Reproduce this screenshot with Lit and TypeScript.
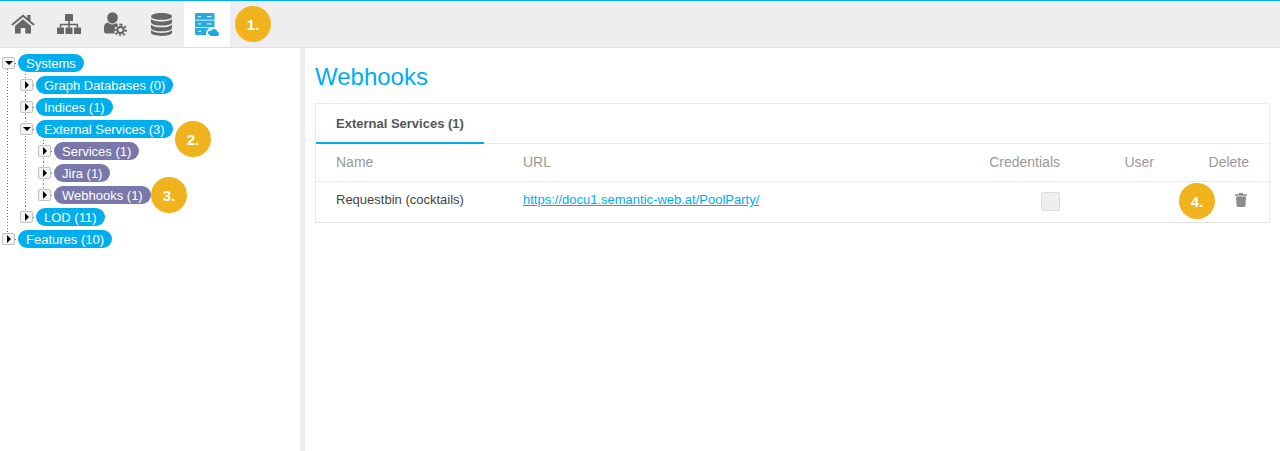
import { LitElement, html, css, svg } from "lit";
import { customElement } from "lit/decorators.js";

type Node = { label: string; kind: "blue" | "purple"; open?: boolean; kids?: Node[]; badge?: string; badgeClass?: string };

const tree: Node[] = [
  {
    label: "Systems", kind: "blue", open: true, kids: [
      { label: "Graph Databases (0)", kind: "blue" },
      { label: "Indices (1)", kind: "blue" },
      {
        label: "External Services (3)", kind: "blue", open: true, badge: "2.", badgeClass: "b2", kids: [
          { label: "Services (1)", kind: "purple" },
          { label: "Jira (1)", kind: "purple" },
          { label: "Webhooks (1)", kind: "purple", badge: "3.", badgeClass: "b3" },
        ],
      },
      { label: "LOD (11)", kind: "blue" },
    ],
  },
  { label: "Features (10)", kind: "blue" },
];

const icons = [
  svg`<svg width="24" height="20" viewBox="0 0 24 20"><path fill="#666" d="M12 0.500 0.300 10.300l1.200 1.500L12 3.100l10.500 8.700 1.200-1.500-4.200-3.500V1h-3.300v3zM4 11.900V19.500h5.700v-5.400h4.600v5.400H20V11.900L12 5.200z"/></svg>`,
  svg`<svg width="24" height="20" viewBox="0 0 24 20"><g fill="#666"><rect x="8" y="0" width="8" height="7" rx=".6"/><rect x="0" y="13.500" width="7" height="6.500" rx=".6"/><rect x="8.500" y="13.500" width="7" height="6.500" rx=".6"/><rect x="17" y="13.500" width="7" height="6.500" rx=".6"/><path d="M11.200 7h1.600v2.700h8.400V13.500h-1.600V11.300h-6.800v2.200h-1.600v-2.200H4.400v2.200H2.800V9.700h8.400z"/></g></svg>`,
  svg`<svg width="23" height="24" viewBox="0 0 23 24"><path fill="#666" d="M8.500 0.200a5.300 5.300 0 0 1 5.300 5.500c0 3-2.400 5.800-5.300 5.800S3.200 8.700 3.200 5.700A5.300 5.300 0 0 1 8.500.2zM4 10.500c1.200 1.200 2.700 1.900 4.500 1.900 1.400 0 2.600-.4 3.600-1.100.8.200 1.500.5 2.100 1-2.300 1.100-3.900 3.500-3.900 6.200 0 1.100.2 2 .6 2.900H2.200c-1.300 0-2.200-.8-2.200-2.100v-4.100c0-2.600 1.500-4.100 4-4.700z"/><g fill="none" stroke="#666"><circle cx="16.500" cy="18" r="3.200" stroke-width="2.200"/><path stroke-width="2" stroke-dasharray="2.100 1.960" d="M16.500 12.500a5.500 5.500 0 1 1 0 11 5.500 5.500 0 0 1 0-11z"/></g></svg>`,
  svg`<svg width="21" height="23" viewBox="0 0 21 23"><g fill="#666"><path d="M10.500 0C16.300 0 21 1.400 21 3.400s-4.700 3.400-10.500 3.400S0 5.400 0 3.400 4.700 0 10.500 0z"/><path d="M0 5.700C1.500 7.500 5.800 8.500 10.500 8.500s9-1 10.500-2.800v3.500c0 2-4.700 3.400-10.500 3.400S0 11.200 0 9.200z"/><path d="M0 11.400c1.500 1.900 5.800 2.900 10.500 2.900s9-1 10.500-2.900v3.500c0 2-4.700 3.400-10.500 3.400S0 16.900 0 14.900z"/><path d="M0 17c1.500 1.900 5.800 2.900 10.500 2.900S19.500 18.900 21 17v2.600c0 2-4.700 3.400-10.500 3.400S0 21.600 0 19.600z"/></g></svg>`,
  svg`<svg width="24" height="23" viewBox="0 0 24 23"><path fill="#29abe2" d="M1.500 0h16.500c.8 0 1.500.7 1.500 1.500V15l-4 7H1.500C.7 22 0 21.300 0 20.500v-19C0 .7.700 0 1.500 0z"/><g fill="#cdeefb"><rect x="0" y="6.700" width="19.500" height="1"/><rect x="0" y="14" width="19.500" height="1"/><rect x="3" y="3" width="3" height="1.200"/><rect x="3" y="10.300" width="3" height="1.200"/><rect x="3" y="17.800" width="3" height="1.200"/><rect x="12" y="3" width="4.500" height="1.200"/><rect x="12" y="10.300" width="4.500" height="1.200"/></g><path fill="#eef9fe" d="M11 23v-4l3-4h7l3 3v5z"/><path fill="#1ea7e4" d="M15.200 23h6.400c1.300 0 2.400-.9 2.400-2.100 0-1.100-.8-1.900-1.800-2.100-.2-1.700-1.500-2.800-3.100-2.800-1.200 0-2.300.7-2.800 1.700-.3-.1-.5-.1-.8-.1-1.300 0-2.500 1-2.500 2.200 0 1.300 1.100 2.200 2.200 2.200z"/></svg>`,
];

@customElement("app-root")
export class AppRoot extends LitElement {
  static styles = css`
    :host { display: block; height: 451px; overflow: hidden; background: #fff; font-family: "Liberation Sans", Arial, sans-serif; color: #444; }
    .topbar { display: flex; height: 46px; background: #eeeeee; border-top: 1px solid #00aeef; border-bottom: 1px solid #dedede; align-items: stretch; }
    .tab { width: 46px; display: flex; align-items: center; justify-content: center; }
    .tab.active { background: #fff; }
    .badge { width: 36px; height: 36px; border-radius: 50%; background: #f0b31d; color: #fff; font-weight: 700; font-size: 15px; display: flex; align-items: center; justify-content: center; flex: none; }
    .topbar .badge { margin: 5px 0 0 5px; }
    .body { display: flex; height: 403px; }
    .side { width: 305px; flex: none; padding: 4px 0 0 2px; box-sizing: border-box; border-right: 5px solid #eeeeee; }
    ul { list-style: none; margin: 0; padding: 0; }
    ul ul { padding-left: 18px; }
    li { position: relative; }
    .row { display: flex; align-items: center; height: 22px; position: relative; }
    li::before { content: ""; position: absolute; left: 5px; top: 0; bottom: 0; width: 1px; background: repeating-linear-gradient(#777 0 1px, transparent 1px 3px); }
    li:last-child::before { bottom: auto; height: 11px; }
    .side > ul > li:first-child::before { top: 11px; }
    .toggle { width: 11px; height: 10px; border: 1px solid #c2c2c2; border-radius: 2px; background: #f2f2f2; flex: none; position: relative; margin-right: 3px; z-index: 1; }
    .toggle::after { content: ""; position: absolute; width: 0; height: 0; border-style: solid; }
    .toggle.closed::after { left: 4px; top: 1px; border-width: 4px 0 4px 4px; border-color: transparent transparent transparent #000; }
    .toggle.opened::after { left: 1.500px; top: 3px; border-width: 4px 4px 0 4px; border-color: #000 transparent transparent transparent; }
    .pill { height: 18px; line-height: 20px; border-radius: 9px; color: #fff; font-size: 13px; padding: 0 8px; white-space: nowrap; position: relative; }
    .pill::before { content: ""; position: absolute; left: -3px; top: 9px; width: 1px; height: 1px; background: #777; }
    .blue { background: #00aeef; }
    .purple { background: #7a77aa; }
    .row .b2 { position: absolute; left: 155px; top: 3px; z-index: 2; }
    .row .b3 { position: absolute; left: 113px; top: -7px; z-index: 2; }
    .main { flex: 1; padding: 15px 10px 0 10px; min-width: 0; }
    h1 { margin: 0 0 12px; font-size: 24px; font-weight: 400; line-height: 28px; color: #00aeef; }
    .card { border: 1px solid #eaeaea; border-bottom-color: #e0e0e0; }
    .tabs { height: 39px; display: flex; border-bottom: 1px solid #eaeaea; }
    .tabitem { width: 168px; box-sizing: border-box; padding-left: 20px; font-size: 13px; font-weight: 700; color: #555; line-height: 39px; border-bottom: 2px solid #00aeef; height: 40px; }
    .grid { display: grid; grid-template-columns: 187px 1fr 130px 94px 95px; padding: 0 20px; align-items: center; font-size: 13px; }
    .head { height: 37px; color: #999; border-bottom: 1px solid #eaeaea; font-size: 14px; }
    .head > span { margin-top: -2px; }
    .rowdata { height: 40px; color: #444; }
    .rowdata > span, .rowdata > a { margin-top: -5px; }
    .r { justify-self: end; }
    a { color: #00aeef; }
    .cell { display: flex; justify-content: flex-end; align-items: center; position: relative; }
    .check { width: 17px; height: 17px; border: 1px solid #dcdcdc; background: #eeeeee; border-radius: 2px; margin-top: -2px; }
    .del .badge { position: absolute; right: 34px; top: -14px; }
    .trash { display: block; margin-right: 2px; margin-top: -4px; }
  `;

  private renderNode(n: Node): unknown {
    return html`<li>
      <div class="row">
        <span class="toggle ${n.open ? "opened" : "closed"}"></span>
        <span class="pill ${n.kind}">${n.label}</span>
        ${n.badge ? html`<span class="badge ${n.badgeClass}">${n.badge}</span>` : ""}
      </div>
      ${n.open && n.kids ? html`<ul>${n.kids.map((k) => this.renderNode(k))}</ul>` : ""}
    </li>`;
  }

  render() {
    return html`
      <div class="topbar">
        ${icons.map((ic, i) => html`<div class="tab ${i === 4 ? "active" : ""}">${ic}</div>`)}
        <span class="badge">1.</span>
      </div>
      <div class="body">
        <aside class="side"><ul>${tree.map((n) => this.renderNode(n))}</ul></aside>
        <main class="main">
          <h1>Webhooks</h1>
          <section class="card">
            <div class="tabs"><div class="tabitem">External Services (1)</div></div>
            <div class="grid head">
              <span>Name</span><span>URL</span><span class="r">Credentials</span><span class="r">User</span><span class="r">Delete</span>
            </div>
            <div class="grid rowdata">
              <span>Requestbin (cocktails)</span>
              <a href="#">https://docu1.semantic-web.at/PoolParty/</a>
              <div class="cell"><span class="check"></span></div>
              <span></span>
              <div class="cell del">
                <span class="badge">4.</span>
                <svg class="trash" width="12" height="14" viewBox="0 0 12 14"><path fill="#8c8c8c" d="M4.200 0h3.600l.5 1.200H12v1.500H0V1.200h3.700zM1 3.500h10l-.6 9.300c0 .7-.5 1.200-1.200 1.200H2.800c-.7 0-1.200-.5-1.200-1.200z"/></svg>
              </div>
            </div>
          </section>
        </main>
      </div>
    `;
  }
}
